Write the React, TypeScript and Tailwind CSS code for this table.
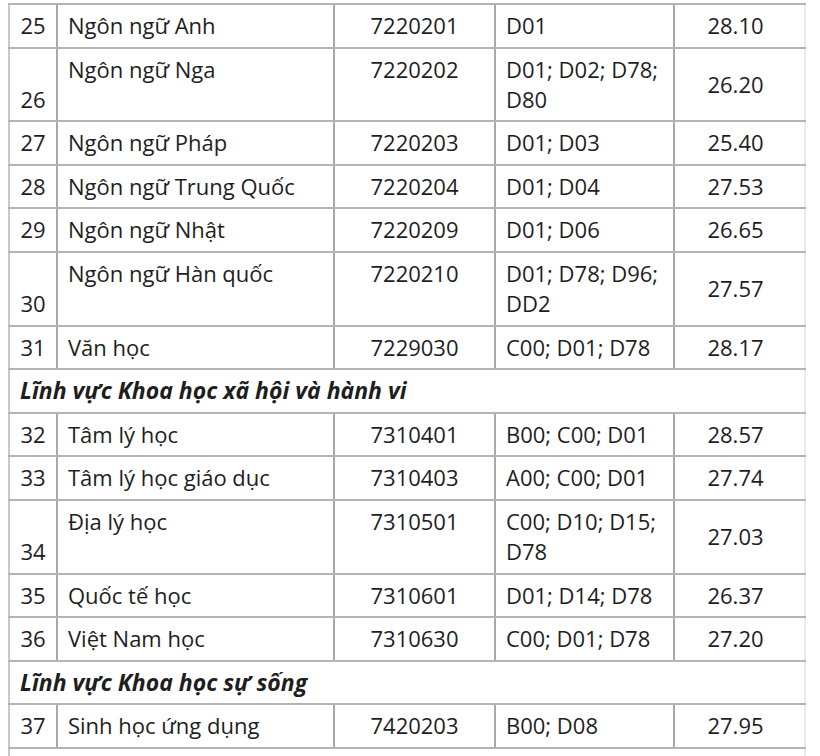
type Row =
  | { kind: "item"; no: number; name: string; code: string; combos: string[]; score: string }
  | { kind: "group"; title: string }

const rows: Row[] = [
  { kind: "item", no: 25, name: "Ngôn ngữ Anh", code: "7220201", combos: ["D01"], score: "28.10" },
  { kind: "item", no: 26, name: "Ngôn ngữ Nga", code: "7220202", combos: ["D01; D02; D78;", "D80"], score: "26.20" },
  { kind: "item", no: 27, name: "Ngôn ngữ Pháp", code: "7220203", combos: ["D01; D03"], score: "25.40" },
  { kind: "item", no: 28, name: "Ngôn ngữ Trung Quốc", code: "7220204", combos: ["D01; D04"], score: "27.53" },
  { kind: "item", no: 29, name: "Ngôn ngữ Nhật", code: "7220209", combos: ["D01; D06"], score: "26.65" },
  { kind: "item", no: 30, name: "Ngôn ngữ Hàn quốc", code: "7220210", combos: ["D01; D78; D96;", "DD2"], score: "27.57" },
  { kind: "item", no: 31, name: "Văn học", code: "7229030", combos: ["C00; D01; D78"], score: "28.17" },
  { kind: "group", title: "Lĩnh vực Khoa học xã hội và hành vi" },
  { kind: "item", no: 32, name: "Tâm lý học", code: "7310401", combos: ["B00; C00; D01"], score: "28.57" },
  { kind: "item", no: 33, name: "Tâm lý học giáo dục", code: "7310403", combos: ["A00; C00; D01"], score: "27.74" },
  { kind: "item", no: 34, name: "Địa lý học", code: "7310501", combos: ["C00; D10; D15;", "D78"], score: "27.03" },
  { kind: "item", no: 35, name: "Quốc tế học", code: "7310601", combos: ["D01; D14; D78"], score: "26.37" },
  { kind: "item", no: 36, name: "Việt Nam học", code: "7310630", combos: ["C00; D01; D78"], score: "27.20" },
  { kind: "group", title: "Lĩnh vực Khoa học sự sống" },
  { kind: "item", no: 37, name: "Sinh học ứng dụng", code: "7420203", combos: ["B00; D08"], score: "27.95" },
]

const cell = "border-y-2 border-y-[#b4b4b4] border-l-2 border-l-[#a8a8a8] pt-[5px] pb-[6.6px]"

export default function App() {
  return (
    <div
      className="h-[756px] overflow-hidden bg-white pl-2 pt-[3px] text-[22px] leading-[30px] text-[#1e1e1e]"
      style={{ fontFamily: '"Open Sans", "Noto Sans", sans-serif' }}
    >
      <table className="w-[796px] table-fixed border-collapse border-r-2 border-r-[#ececec]">
        <colgroup>
          <col className="w-[48px]" />
          <col className="w-[277px]" />
          <col className="w-[161px]" />
          <col className="w-[179px]" />
          <col className="w-[131px]" />
        </colgroup>
        <tbody>
          {rows.map((r, i) =>
            r.kind === "group" ? (
              <tr key={i}>
                <td colSpan={5} className={`${cell} border-l-[#c8c8c8] px-[10px] text-[23px] font-bold italic`}>
                  {r.title}
                </td>
              </tr>
            ) : (
              <tr key={i}>
                <td className={`${cell} border-l-[#c8c8c8] text-center align-bottom`}>{r.no}</td>
                <td className={`${cell} px-[10px] align-top`}>{r.name}</td>
                <td className={`${cell} text-center align-top`}>{r.code}</td>
                <td className={`${cell} px-[10px] align-top`}>
                  {r.combos.map((c) => (
                    <div key={c}>{c}</div>
                  ))}
                </td>
                <td className={`${cell} pr-[8px] text-center align-middle`}>{r.score}</td>
              </tr>
            )
          )}
          <tr>
            <td colSpan={5} className={`${cell} border-l-[#c8c8c8] px-[10px]`}>
              &nbsp;
            </td>
          </tr>
        </tbody>
      </table>
    </div>
  )
}
